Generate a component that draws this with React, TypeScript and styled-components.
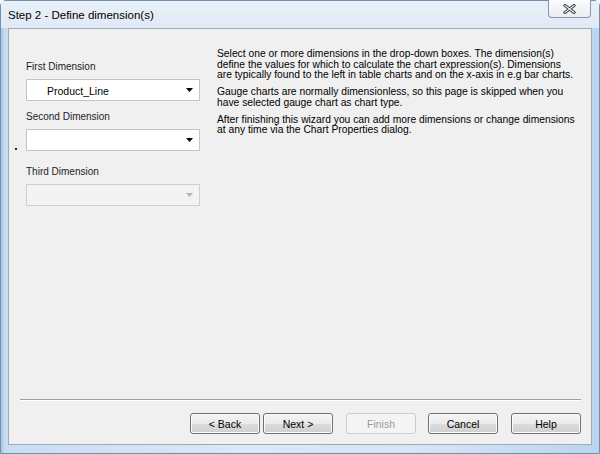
import styled, { createGlobalStyle } from "styled-components";

const GlobalStyle = createGlobalStyle`
  html, body {
    margin: 0;
    padding: 0;
    background: #ffffff;
  }
  body {
    width: 600px;
    height: 454px;
    overflow: hidden;
    font-family: "Liberation Sans", Arial, sans-serif;
  }
`;

const fields = [
  { label: "First Dimension", value: "Product_Line" },
  { label: "Second Dimension", value: "", dot: true },
  { label: "Third Dimension", value: "", disabled: true },
];

// wrapped as in the dialog
const paragraphs = [
  [
    "Select one or more dimensions in the drop-down boxes. The dimension(s)",
    "define the values for which to calculate the chart expression(s). Dimensions",
    "are typically found to the left in table charts and on the x-axis in e.g bar charts.",
  ],
  [
    "Gauge charts are normally dimensionless, so this page is skipped when you",
    "have selected gauge chart as chart type.",
  ],
  [
    "After finishing this wizard you can add more dimensions or change dimensions",
    "at any time via the Chart Properties dialog.",
  ],
];

const buttons = [
  { label: "< Back", gap: 0 },
  { label: "Next >", gap: 3 },
  { label: "Finish", gap: 13, disabled: true },
  { label: "Cancel", gap: 12 },
  { label: "Help", gap: 13 },
];

const CloseGlyph = () => (
  <svg width="13" height="10" viewBox="0 0 13 10">
    <path d="M2 1.5 L11 8.5 M11 1.5 L2 8.5" stroke="#3a3a3a" strokeWidth="3" strokeLinecap="square" />
    <path d="M2 1.5 L11 8.5 M11 1.5 L2 8.5" stroke="#f4f4f4" strokeWidth="1.2" strokeLinecap="square" />
  </svg>
);

const Arrow = ({ disabled }: { disabled?: boolean }) => (
  <svg width="7" height="4" viewBox="0 0 7 4">
    <path d="M0 0 H7 L3.5 4 Z" fill={disabled ? "#b4b4b4" : "#000"} />
  </svg>
);

const App = () => {
  return (
    <>
      <GlobalStyle />
      <Window>
        <TitleBar>
          <Title>Step 2 - Define dimension(s)</Title>
          <CloseButton>
            <CloseGlyph />
          </CloseButton>
        </TitleBar>
        <Client>
          <Body>
            <LeftColumn>
              {fields.map((f) => (
                <Field key={f.label} $extra={f.disabled ? 5 : 0}>
                  <FieldLabel>{f.label}</FieldLabel>
                  <ComboRow>
                    {f.dot && <Dot />}
                    <Combo $disabled={f.disabled}>
                      <ComboText>{f.value}</ComboText>
                      <Arrow disabled={f.disabled} />
                    </Combo>
                  </ComboRow>
                </Field>
              ))}
            </LeftColumn>
            <HelpText>
              {paragraphs.map((p) => (
                <Paragraph key={p[0]}>
                  {p.map((line) => (
                    <Line key={line}>{line}</Line>
                  ))}
                </Paragraph>
              ))}
            </HelpText>
          </Body>
          <Separator />
          <ButtonRow>
            {buttons.map((b) => (
              <Button key={b.label} $gap={b.gap} $disabled={b.disabled}>
                {b.label}
              </Button>
            ))}
          </ButtonRow>
        </Client>
      </Window>
    </>
  );
};

const Window = styled.div`
  width: 600px;
  height: 454px;
  box-sizing: border-box;
  display: flex;
  flex-direction: column;
  padding: 0 7px 8px 7px;
  border: 1px solid #6f8fb0;
  border-radius: 6px 6px 0 0;
  background: linear-gradient(to right, #a9c6e4 0px, #c9ddf1 4px, #dbe8f5 40%, #d6e5f4 70%, #bcd5ee 100%);
`;

const TitleBar = styled.div`
  height: 27px;
  display: flex;
  align-items: flex-start;
  justify-content: space-between;
  background: linear-gradient(to bottom, #e9f0f8, #e0eaf5);
  margin: 0 -7px;
  padding: 0 7px;
`;

const Title = styled.div`
  font-size: 11.5px;
  color: #000;
  padding-top: 8px;
`;

const CloseButton = styled.div`
  width: 43px;
  height: 18px;
  margin-top: -1px;
  margin-right: 1px;
  box-sizing: border-box;
  border: 1px solid #8a96a4;
  border-top: none;
  border-radius: 0 0 4px 4px;
  background: linear-gradient(to bottom, #fbfcfd, #e9eef3);
  display: flex;
  align-items: center;
  justify-content: center;
`;

const Client = styled.div`
  flex: 1;
  display: flex;
  flex-direction: column;
  background: #f0f0f0;
  border: 1px solid #9eaab7;
  padding: 0 10px 0 11px;
`;

const Body = styled.div`
  flex: 1;
  display: flex;
  gap: 17px;
  padding-top: 19px;
`;

const LeftColumn = styled.div`
  width: 174px;
  padding-left: 6px;
  padding-top: 13px;
  display: flex;
  flex-direction: column;
  gap: 10px;
`;

const Field = styled.div<{ $extra: number }>`
  display: flex;
  flex-direction: column;
  gap: 7px;
  margin-top: ${({ $extra }) => $extra}px;
`;

const FieldLabel = styled.div`
  font-size: 10px;
  line-height: 11px;
  color: #1c1c1c;
`;

const ComboRow = styled.div`
  display: flex;
  align-items: flex-end;
`;

const Dot = styled.span`
  width: 2px;
  height: 2px;
  background: #222;
  margin: 0 9px 1px -11px;
`;

const Combo = styled.div<{ $disabled?: boolean }>`
  width: 174px;
  height: 22px;
  box-sizing: border-box;
  display: flex;
  align-items: center;
  justify-content: space-between;
  padding: 0 6px 0 20px;
  border: 1px solid ${({ $disabled }) => ($disabled ? "#cfcfcf" : "#c2c4c8")};
  background: ${({ $disabled }) => ($disabled ? "#f3f3f3" : "#ffffff")};
`;

const ComboText = styled.span`
  font-size: 10.5px;
  color: #000;
  padding-top: 1px;
`;

const HelpText = styled.div`
  width: 364px;
  padding-top: 1px;
  font-size: 10.3px;
  line-height: 10.5px;
  color: #000;
`;

const Paragraph = styled.p`
  margin: 0 0 6.5px 0;
`;

const Line = styled.span`
  display: block;
  white-space: nowrap;
`;

const Separator = styled.div`
  height: 0;
  border-top: 1px solid #a0a0a0;
  border-bottom: 1px solid #ffffff;
  margin-bottom: 12px;
`;

const ButtonRow = styled.div`
  display: flex;
  justify-content: flex-end;
  padding-bottom: 10px;
`;

const Button = styled.div<{ $gap: number; $disabled?: boolean }>`
  width: 70px;
  height: 21px;
  box-sizing: border-box;
  margin-left: ${({ $gap }) => $gap}px;
  display: flex;
  align-items: center;
  justify-content: center;
  font-size: 10.5px;
  border-radius: 3px;
  border: 1px solid ${({ $disabled }) => ($disabled ? "#c9cdd1" : "#707070")};
  color: ${({ $disabled }) => ($disabled ? "#9a9a9a" : "#000")};
  background: ${({ $disabled }) =>
    $disabled
      ? "#f4f4f4"
      : "linear-gradient(to bottom, #f4f4f4 0%, #ebebeb 50%, #dddddd 51%, #cfcfcf 100%)"};
  box-shadow: inset 0 0 0 1px ${({ $disabled }) => ($disabled ? "transparent" : "#fcfcfc")};
`;

export default App;
